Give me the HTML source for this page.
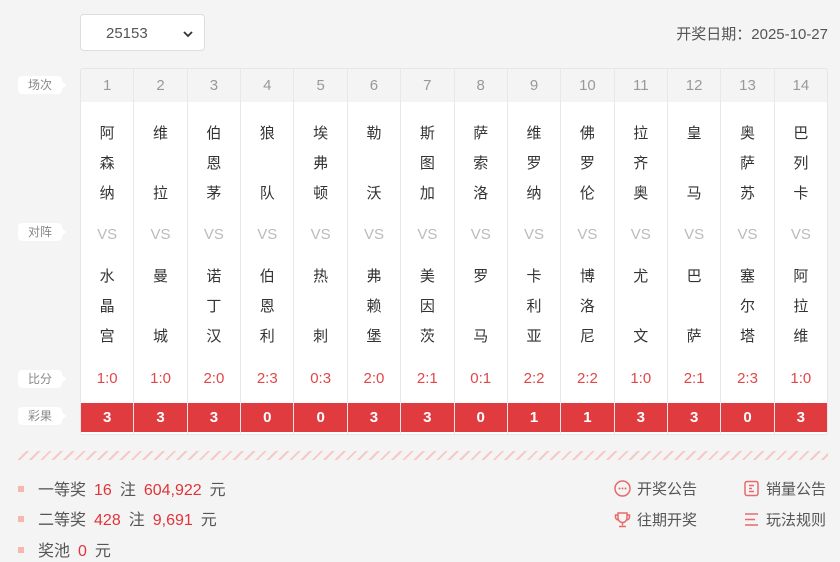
<!DOCTYPE html>
<html><head><meta charset="utf-8"><style>
*{margin:0;padding:0;box-sizing:border-box}
body{width:840px;height:562px;background:#f4f4f4;font-family:"Liberation Sans","Noto Sans CJK SC",sans-serif;position:relative;overflow:hidden;color:#333}
.sel{position:absolute;left:80px;top:14px;width:125px;height:37px;background:#fff;border:1px solid #ddd;border-radius:4px;font-size:15px;color:#555;line-height:37px;padding-left:25px}
.sel svg{position:absolute;right:10px;top:15px}
.date{position:absolute;right:12px;top:23px;font-size:15px;color:#555}
.tbl{position:absolute;left:80px;top:68px;width:748px;height:367px;background:#fff;border:1px solid #e6e6e6;border-radius:3px;display:flex;overflow:hidden}
.col{flex:1;border-left:1px solid #e8e8e8;position:relative;text-align:center}
.col:first-child{border-left:none}
.hd{height:33px;background:#f4f4f4;color:#999;font-size:15px;line-height:33px}
.t{position:absolute;left:0;right:0;font-size:15px;line-height:30px;color:#333}
.t1{top:50px}.t2{top:193px}
.vs{position:absolute;top:154px;left:0;right:0;color:#bbb;font-size:15px;line-height:24px}
.sc{position:absolute;top:298px;left:0;right:0;color:#e0474a;font-size:15px;line-height:24px}
.rs{position:absolute;top:334px;left:0;right:0;height:29px;background:#e03c3f;color:#fff;font-weight:bold;font-size:15px;line-height:29px}
.lb{position:absolute;left:18px;width:44px;height:18px;background:#fff;border-radius:4px;font-size:12px;color:#888;text-align:center;line-height:18px}
.lb:after{content:"";position:absolute;right:-4px;top:5px;border-left:4px solid #fff;border-top:4px solid transparent;border-bottom:4px solid transparent}
.stripe{position:absolute;left:18px;top:451px;width:810px;height:9px;background:repeating-linear-gradient(135deg,transparent 0 6px,#f6c9c4 6px 8px)}
.pz{position:absolute;left:18px;font-size:16px;color:#555}
.pz i{display:inline-block;width:6px;height:6px;background:#f6b7b0;margin-right:14px;vertical-align:3px}
.pz b{font-weight:normal;color:#e0343a;margin:0 8px}
.lk{position:absolute;font-size:15px;color:#555}
.lk svg{vertical-align:-3px;margin-right:6px}
</style></head><body>
<div class="sel">25153<svg width="12" height="8" viewBox="0 0 12 8"><path d="M2 2l4 4 4-4" stroke="#333" stroke-width="1.8" fill="none"/></svg></div>
<div class="date">开奖日期：2025-10-27</div>
<div class="lb" style="top:76px">场次</div>
<div class="lb" style="top:223px">对阵</div>
<div class="lb" style="top:370px">比分</div>
<div class="lb" style="top:407px">彩果</div>
<div class="tbl">
<div class="col"><div class="hd">1</div><div class="t t1">阿<br>森<br>纳</div><div class="vs">VS</div><div class="t t2">水<br>晶<br>宫</div><div class="sc">1:0</div><div class="rs">3</div></div>
<div class="col"><div class="hd">2</div><div class="t t1">维<br>&nbsp;<br>拉</div><div class="vs">VS</div><div class="t t2">曼<br>&nbsp;<br>城</div><div class="sc">1:0</div><div class="rs">3</div></div>
<div class="col"><div class="hd">3</div><div class="t t1">伯<br>恩<br>茅</div><div class="vs">VS</div><div class="t t2">诺<br>丁<br>汉</div><div class="sc">2:0</div><div class="rs">3</div></div>
<div class="col"><div class="hd">4</div><div class="t t1">狼<br>&nbsp;<br>队</div><div class="vs">VS</div><div class="t t2">伯<br>恩<br>利</div><div class="sc">2:3</div><div class="rs">0</div></div>
<div class="col"><div class="hd">5</div><div class="t t1">埃<br>弗<br>顿</div><div class="vs">VS</div><div class="t t2">热<br>&nbsp;<br>刺</div><div class="sc">0:3</div><div class="rs">0</div></div>
<div class="col"><div class="hd">6</div><div class="t t1">勒<br>&nbsp;<br>沃</div><div class="vs">VS</div><div class="t t2">弗<br>赖<br>堡</div><div class="sc">2:0</div><div class="rs">3</div></div>
<div class="col"><div class="hd">7</div><div class="t t1">斯<br>图<br>加</div><div class="vs">VS</div><div class="t t2">美<br>因<br>茨</div><div class="sc">2:1</div><div class="rs">3</div></div>
<div class="col"><div class="hd">8</div><div class="t t1">萨<br>索<br>洛</div><div class="vs">VS</div><div class="t t2">罗<br>&nbsp;<br>马</div><div class="sc">0:1</div><div class="rs">0</div></div>
<div class="col"><div class="hd">9</div><div class="t t1">维<br>罗<br>纳</div><div class="vs">VS</div><div class="t t2">卡<br>利<br>亚</div><div class="sc">2:2</div><div class="rs">1</div></div>
<div class="col"><div class="hd">10</div><div class="t t1">佛<br>罗<br>伦</div><div class="vs">VS</div><div class="t t2">博<br>洛<br>尼</div><div class="sc">2:2</div><div class="rs">1</div></div>
<div class="col"><div class="hd">11</div><div class="t t1">拉<br>齐<br>奥</div><div class="vs">VS</div><div class="t t2">尤<br>&nbsp;<br>文</div><div class="sc">1:0</div><div class="rs">3</div></div>
<div class="col"><div class="hd">12</div><div class="t t1">皇<br>&nbsp;<br>马</div><div class="vs">VS</div><div class="t t2">巴<br>&nbsp;<br>萨</div><div class="sc">2:1</div><div class="rs">3</div></div>
<div class="col"><div class="hd">13</div><div class="t t1">奥<br>萨<br>苏</div><div class="vs">VS</div><div class="t t2">塞<br>尔<br>塔</div><div class="sc">2:3</div><div class="rs">0</div></div>
<div class="col"><div class="hd">14</div><div class="t t1">巴<br>列<br>卡</div><div class="vs">VS</div><div class="t t2">阿<br>拉<br>维</div><div class="sc">1:0</div><div class="rs">3</div></div>
</div>
<div class="stripe"></div>
<div class="pz" style="top:476px"><i></i>一等奖<b>16</b>注<b>604,922</b>元</div>
<div class="pz" style="top:506px"><i></i>二等奖<b>428</b>注<b>9,691</b>元</div>
<div class="pz" style="top:537px"><i></i>奖池<b>0</b>元</div>
<div class="lk" style="left:614px;top:478px"><svg width="17" height="17" viewBox="0 0 17 17"><circle cx="8.5" cy="8.5" r="7.5" stroke="#e8696b" stroke-width="1.5" fill="none"/><circle cx="5.5" cy="8.5" r="1" fill="#e8696b"/><circle cx="8.5" cy="8.5" r="1" fill="#e8696b"/><circle cx="11.5" cy="8.5" r="1" fill="#e8696b"/></svg>开奖公告</div>
<div class="lk" style="left:743px;top:478px"><svg width="17" height="17" viewBox="0 0 17 17"><rect x="2" y="1.5" width="13" height="14" rx="2" stroke="#e8696b" stroke-width="1.5" fill="none"/><path d="M6 5.5h5M6 8.5h3M6 11.5h5" stroke="#e8696b" stroke-width="1.5"/></svg>销量公告</div>
<div class="lk" style="left:614px;top:509px"><svg width="17" height="17" viewBox="0 0 17 17"><path d="M4 2h9v5a4.5 4.5 0 0 1-9 0zM4 4H1.5v2a3 3 0 0 0 3 3M13 4h2.5v2a3 3 0 0 1-3 3M8.5 11.5v3M5 15.5h7" stroke="#e8696b" stroke-width="1.5" fill="none"/></svg>往期开奖</div>
<div class="lk" style="left:743px;top:509px"><svg width="17" height="17" viewBox="0 0 17 17"><path d="M2 3h13M2 8.5h10M2 14h13" stroke="#e8696b" stroke-width="1.6"/></svg>玩法规则</div>
</body></html>
